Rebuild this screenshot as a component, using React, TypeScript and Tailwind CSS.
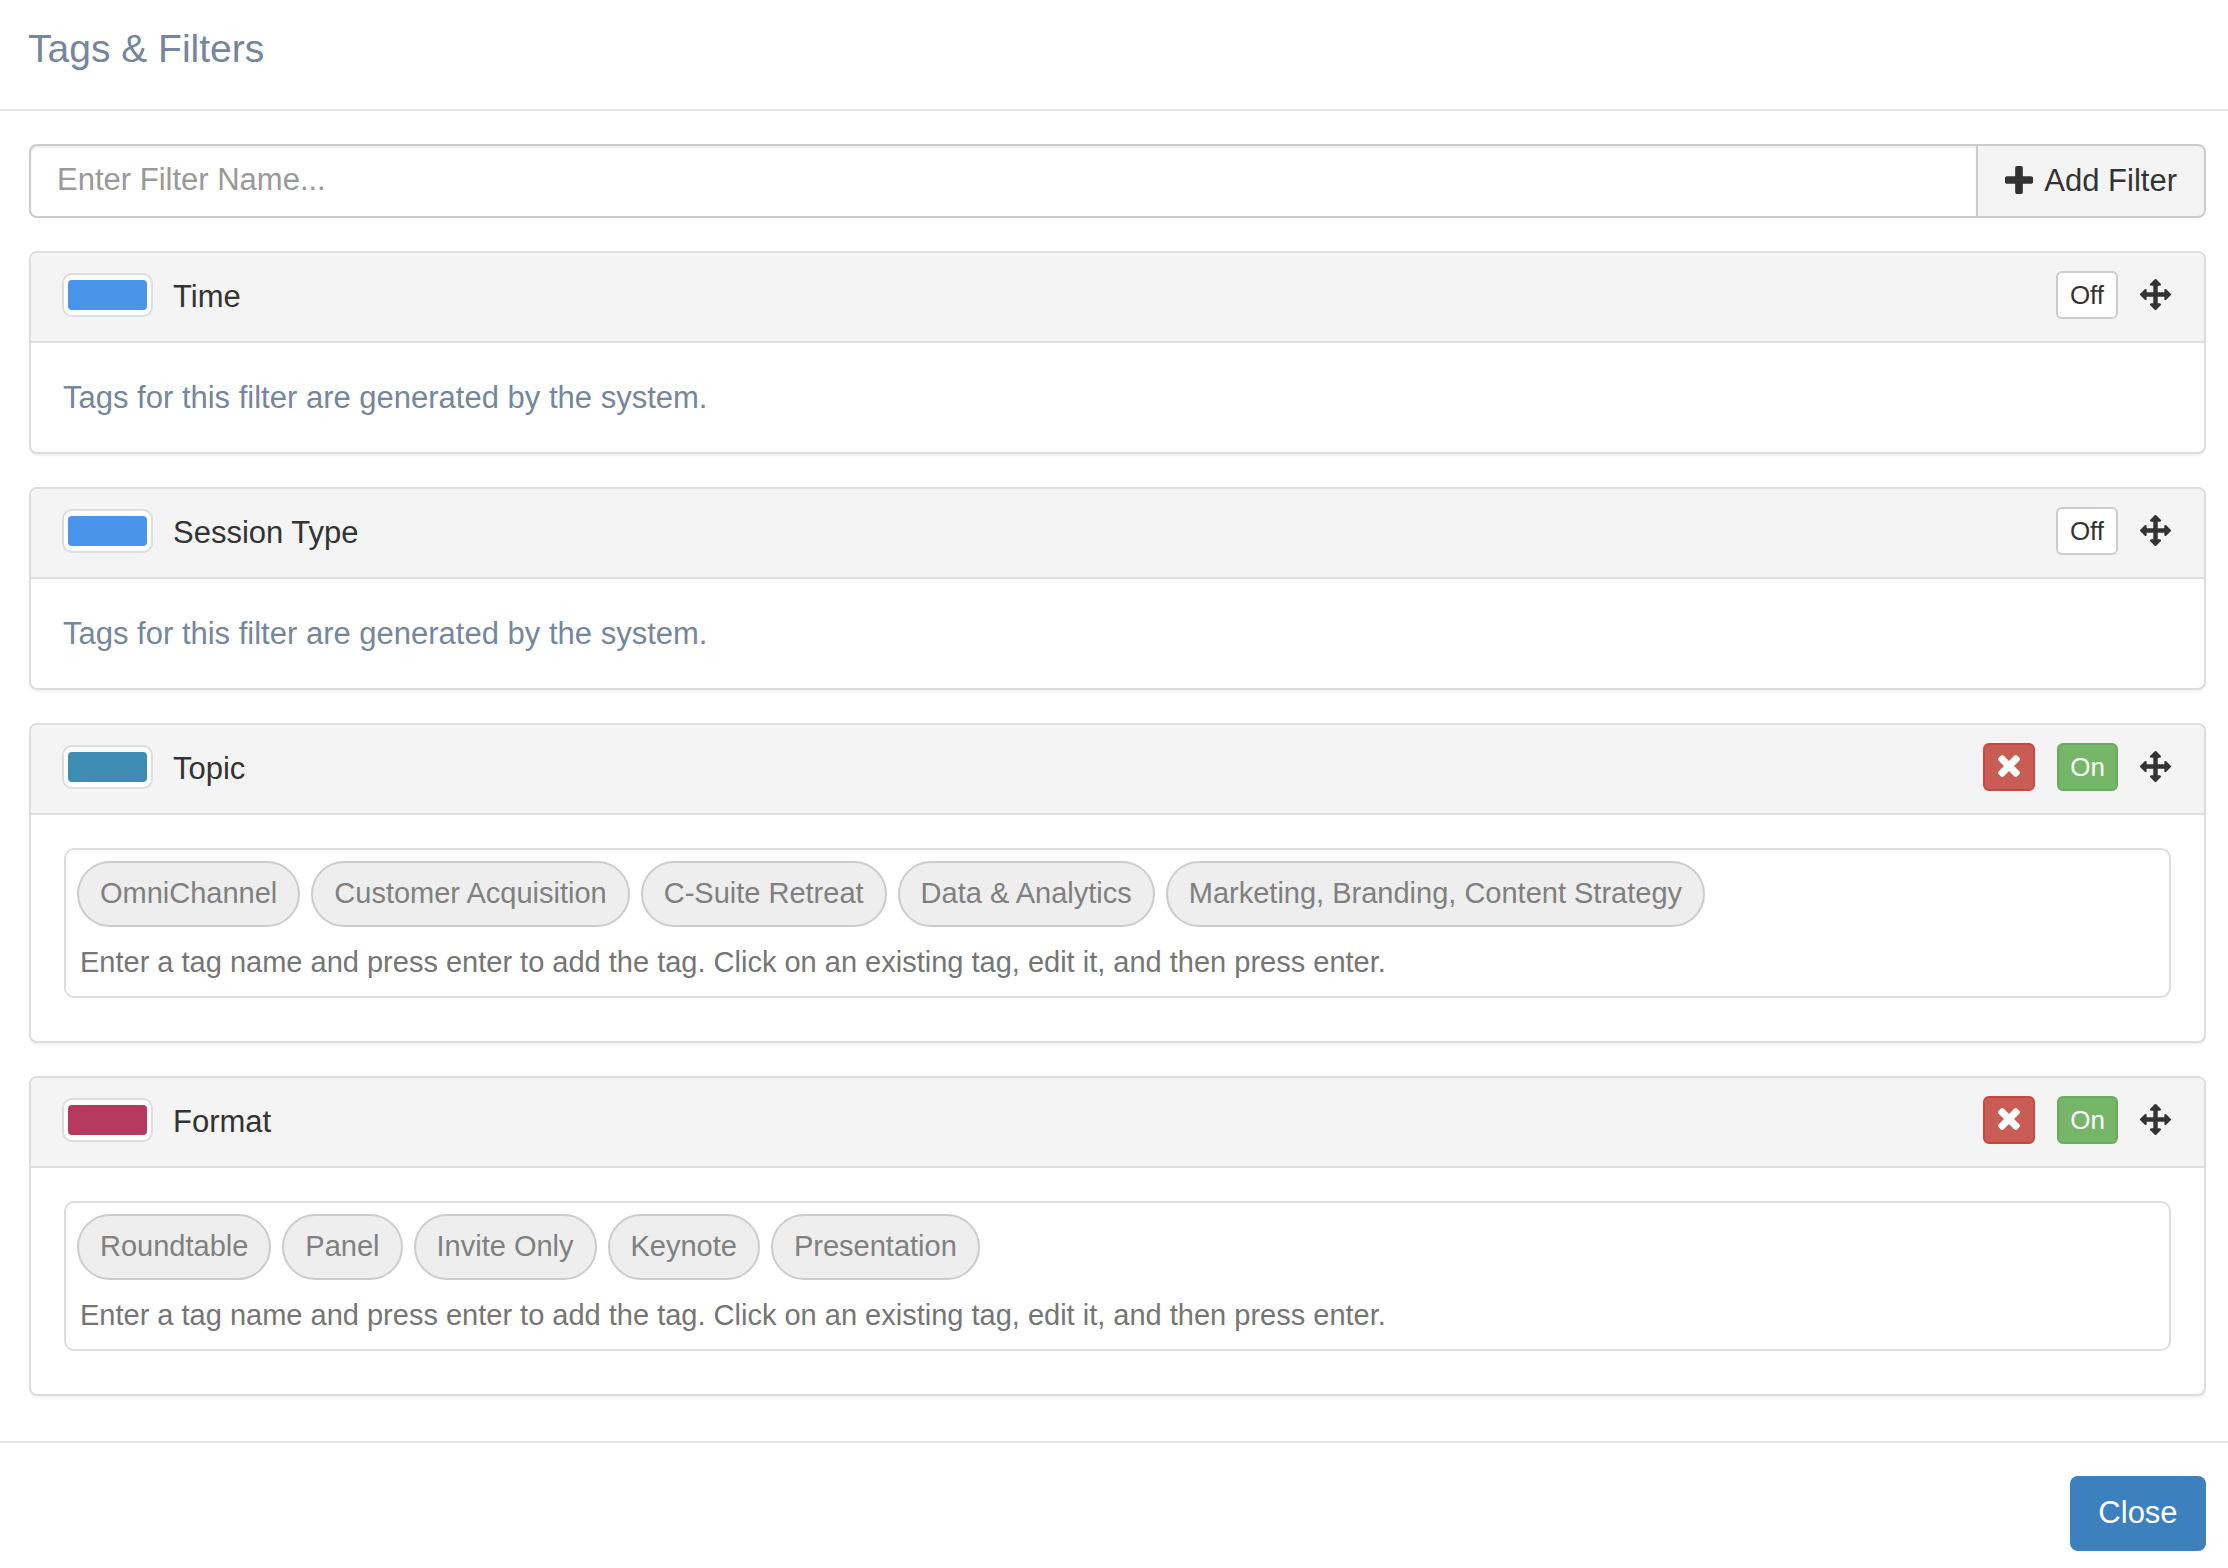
import { useState } from "react";

type Filter = {
  name: string;
  color: string;
  enabled: boolean;
  tags?: string[];
};

const FILTERS: Filter[] = [
  { name: "Time", color: "#4a94ec", enabled: false },
  { name: "Session Type", color: "#4a94ec", enabled: false },
  {
    name: "Topic",
    color: "#3f8db2",
    enabled: true,
    tags: [
      "OmniChannel",
      "Customer Acquisition",
      "C-Suite Retreat",
      "Data & Analytics",
      "Marketing, Branding, Content Strategy",
    ],
  },
  {
    name: "Format",
    color: "#b53a5e",
    enabled: true,
    tags: ["Roundtable", "Panel", "Invite Only", "Keynote", "Presentation"],
  },
];

const TAG_HINT =
  "Enter a tag name and press enter to add the tag. Click on an existing tag, edit it, and then press enter.";

function PlusIcon() {
  return (
    <svg viewBox="192 128 1408 1408" className="mb-0.5 size-7 fill-current" aria-hidden="true">
      <path d="M1600 736v192q0 40-28 68t-68 28h-416v416q0 40-28 68t-68 28h-192q-40 0-68-28t-28-68v-416h-416q-40 0-68-28t-28-68v-192q0-40 28-68t68-28h416v-416q0-40 28-68t68-28h192q40 0 68 28t28 68v416h416q40 0 68 28t28 68z" />
    </svg>
  );
}

function TimesIcon() {
  return (
    <svg viewBox="302 366 1188 1188" className="mb-0.5 size-[22px] fill-current" aria-hidden="true">
      <path d="M1490 1322q0 40-28 68l-136 136q-28 28-68 28t-68-28l-294-294-294 294q-28 28-68 28t-68-28l-136-136q-28-28-28-68t28-68l294-294-294-294q-28-28-28-68t28-68l136-136q28-28 68-28t68 28l294 294 294-294q28-28 68-28t68 28l136 136q28 28 28 68t-28 68l-294 294 294 294q28 28 28 68z" />
    </svg>
  );
}

function MoveIcon() {
  return (
    <svg viewBox="0 0 1792 1792" className="mb-0.5 size-[31px] fill-current" aria-hidden="true">
      <path d="M1792 896q0 26-19 45l-256 256q-19 19-45 19t-45-19-19-45v-128h-384v384h128q26 0 45 19t19 45-19 45l-256 256q-19 19-45 19t-45-19l-256-256q-19-19-19-45t19-45 45-19h128v-384h-384v128q0 26-19 45t-45 19-45-19l-256-256q-19-19-19-45t19-45l256-256q19-19 45-19t45 19 19 45v128h384v-384h-128q-26 0-45-19t-19-45 19-45l256-256q19-19 45-19t45 19l256 256q19 19 19 45t-19 45-45 19h-128v384h384v-128q0-26 19-45t45-19 45 19l256 256q19 19 19 45z" />
    </svg>
  );
}

function ToggleButton({ name, initial }: { name: string; initial: boolean }) {
  const [on, setOn] = useState(initial);
  return (
    <button
      type="button"
      aria-pressed={on}
      title={name}
      onClick={() => setOn(!on)}
      className={
        on
          ? "h-12 w-[61px] rounded-md border-2 border-[#67ad5b] bg-[#76b668] text-[26px] leading-none text-white"
          : "h-12 w-[62px] rounded-md border-2 border-[#cccccc] bg-white text-[26px] leading-none"
      }
    >
      {on ? "On" : "Off"}
    </button>
  );
}

function FilterPanel({ filter }: { filter: Filter }) {
  return (
    <section className="rounded-lg border-2 border-[#dddddd] bg-white shadow-[0_2px_2px_rgba(0,0,0,0.05)]">
      <div className="flex items-center rounded-t-md border-b-2 border-[#dddddd] bg-[#f4f4f4] pt-[18px] pr-[33px] pb-[22px] pl-[31px]">
        <button
          type="button"
          aria-label={`${filter.name} color`}
          className="h-11 w-[91px] rounded-[10px] border-2 border-[#dddddd] bg-white px-1 py-[5px]"
        >
          <span className="block h-full rounded" style={{ backgroundColor: filter.color }} />
        </button>
        <h2 className="ml-5 flex-1 pt-1 text-[31px] leading-[44px]">{filter.name}</h2>
        <div className="flex items-center gap-[22px]">
          {filter.tags && (
            <button
              type="button"
              aria-label={`Delete ${filter.name}`}
              className="flex h-12 w-[52px] items-center justify-center rounded-md border-2 border-[#c64840] bg-[#c95c54] text-white"
            >
              <TimesIcon />
            </button>
          )}
          <ToggleButton name={filter.name} initial={filter.enabled} />
          <button type="button" aria-label={`Move ${filter.name}`} className="cursor-move">
            <MoveIcon />
          </button>
        </div>
      </div>
      {filter.tags ? (
        <div className="px-[33px] pt-[33px] pb-[43px]">
          <div className="rounded-[10px] border-2 border-[#dddddd] px-[11px] pt-[11px] pb-[13px]">
            <div className="flex flex-wrap gap-[11px]">
              {filter.tags.map((tag) => (
                <button
                  key={tag}
                  type="button"
                  className="h-[66px] rounded-full border-2 border-[#cccccc] bg-[#eeeeee] px-[21px] pb-0.5 text-[29px] leading-none text-[#808080]"
                >
                  {tag}
                </button>
              ))}
            </div>
            <input
              type="text"
              aria-label={`Add a tag to ${filter.name}`}
              placeholder={TAG_HINT}
              className="mt-3.5 block h-[42px] w-full pl-[3px] text-[29px] leading-[42px] outline-none placeholder:text-[#757575]"
            />
          </div>
        </div>
      ) : (
        <p className="px-8 pt-[33px] pb-8 text-[31px] leading-[44px] text-[#75869d]">
          Tags for this filter are generated by the system.
        </p>
      )}
    </section>
  );
}

export default function App() {
  return (
    <div className="min-h-screen bg-white font-['Liberation_Sans',Arial,sans-serif] text-[#333333]">
      <header className="border-b-2 border-[#e5e5e5] px-7 pt-[21px] pb-[33px]">
        <h1 className="text-[39px] leading-[55px] text-[#75869d]">Tags &amp; Filters</h1>
      </header>

      <main className="pt-[33px] pr-[22px] pb-[45px] pl-[29px]">
        <form className="flex h-[74px]" onSubmit={(e) => e.preventDefault()}>
          <input
            type="text"
            aria-label="Filter name"
            placeholder="Enter Filter Name..."
            className="min-w-0 flex-1 rounded-l-lg border-2 border-r-0 border-[#cccccc] pb-0.5 pl-[26px] text-[31px] shadow-[inset_0_2px_2px_rgba(0,0,0,0.075)] outline-none placeholder:text-[#999999]"
          />
          <button
            type="submit"
            className="flex items-center gap-[11px] rounded-r-lg border-2 border-[#cccccc] bg-[#f4f4f4] px-[27px] text-[31px]"
          >
            <PlusIcon />
            Add Filter
          </button>
        </form>

        <div className="mt-[33px] flex flex-col gap-[33px]">
          {FILTERS.map((filter) => (
            <FilterPanel key={filter.name} filter={filter} />
          ))}
        </div>
      </main>

      <footer className="flex justify-end border-t-2 border-[#e5e5e5] pt-[33px] pr-[22px] pb-[17px]">
        <button
          type="button"
          className="h-[75px] w-[136px] rounded-lg bg-[#3d80be] text-[31px] text-white"
        >
          Close
        </button>
      </footer>
    </div>
  );
}
